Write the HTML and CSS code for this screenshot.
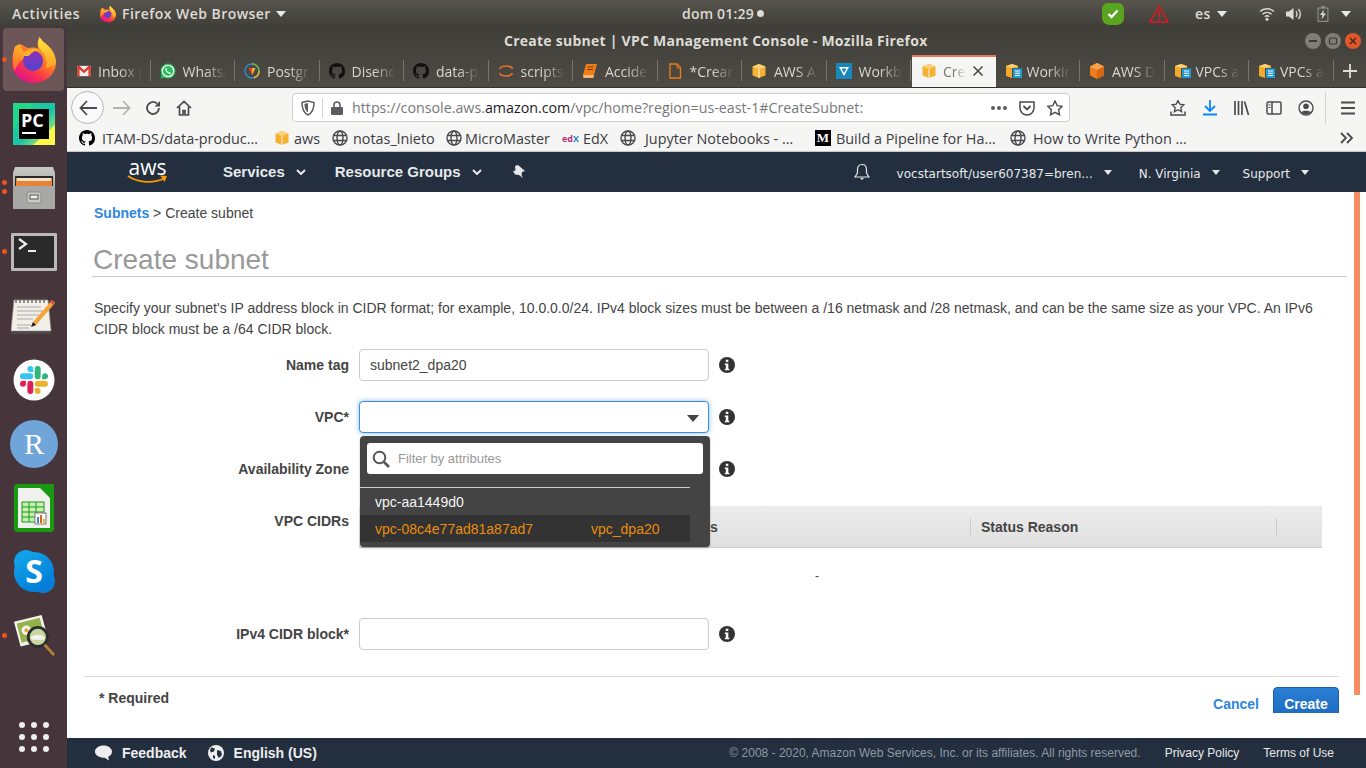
FILE: index.html
```html
<!DOCTYPE html>
<html lang="en">
<head>
<meta charset="utf-8">
<title>Create subnet | VPC Management Console</title>
<link rel="stylesheet" href="styles.css">
</head>
<body>
<svg class="defs" width="0" height="0" aria-hidden="true">
  <defs>
    <linearGradient id="ffbase" x1="0.9" y1="0.15" x2="0.3" y2="1">
      <stop offset="0" stop-color="#ffb52a"/><stop offset="0.4" stop-color="#ff7d24"/><stop offset="0.72" stop-color="#f9314f"/><stop offset="1" stop-color="#e0148c"/>
    </linearGradient>
    <linearGradient id="ffflame" x1="0.4" y1="0" x2="0.7" y2="1">
      <stop offset="0" stop-color="#ffe03c"/><stop offset="1" stop-color="#ffa428"/>
    </linearGradient>
    <linearGradient id="fftail" x1="0.6" y1="0" x2="0.4" y2="1">
      <stop offset="0" stop-color="#ffb92c"/><stop offset="1" stop-color="#ff6a2a"/>
    </linearGradient>
    <linearGradient id="ffcore" x1="0.5" y1="0" x2="0.5" y2="1">
      <stop offset="0" stop-color="#8f2fb8"/><stop offset="1" stop-color="#5046cf"/>
    </linearGradient>
    <linearGradient id="skypeg" x1="0.2" y1="0" x2="0.8" y2="1">
      <stop offset="0" stop-color="#12a6ec"/><stop offset="1" stop-color="#0078d4"/>
    </linearGradient>
    <linearGradient id="filesg" x1="0" y1="0" x2="0" y2="1">
      <stop offset="0" stop-color="#c9c9c7"/><stop offset="1" stop-color="#8d8d8b"/>
    </linearGradient>
    <linearGradient id="pcg" x1="0" y1="0" x2="1" y2="1">
      <stop offset="0" stop-color="#21d789"/><stop offset="0.55" stop-color="#19c4a8"/><stop offset="1" stop-color="#fcf84a"/>
    </linearGradient>
    <symbol id="firefox" viewBox="0 0 48 50">
      <path d="M3 11C1 18 0 24 0 29c0 12 11 21 24 21s24-10 24-22c0-10-7-18-13-22-2-2-4-4-5-6-2 5-3 9-1 13-4-2-8-2-12-1-3-2-8-5-9-4-2 0-4 1-5 3z" fill="url(#ffbase)"/>
      <path d="M30 0c-2 6-2 11 3 16 5 5 6 13 4 18 5-3 10-2 11-6 0-10-7-18-13-22-2-2-4-4-5-6z" fill="url(#ffflame)"/>
      <path d="M3 11C0 20 0 30 3 37c3-9 8-13 13-15-2-5-6-10-7-14-2 0-4 1-6 3z" fill="url(#fftail)"/>
      <circle cx="23" cy="26" r="11" fill="url(#ffcore)"/>
      <path d="M11 19c5-7 13-8 21-4-5-1-10 1-13 5-3 1-6 1-8-1z" fill="#ffb02a"/>
    </symbol>
    <symbol id="cube" viewBox="1 1 14 14">
      <path d="M8 1l6.500 2.600v8.800L8 15 1.500 12.400V3.600z" fill="#f4b133"/>
      <path d="M1.500 3.600L8 6.200l6.500-2.600L8 1z" fill="#fbd27a"/>
      <path d="M7.500 6.200h1V15h-1z" fill="#fff6df"/>
    </symbol>
    <symbol id="doccube" viewBox="0 0 18 16">
      <path d="M7 1l6 2v2H7v10L1 13V3z" fill="#f3a92c"/>
      <path d="M1 3l6 2 6-2-6-2z" fill="#fbd27a"/>
      <path d="M8 5.500h9V15H8z" fill="#1f9ad6"/>
      <path d="M10 7.500h5v1h-5zM10 9.800h5v1h-5zM10 12h5v1h-5z" fill="#fff"/>
    </symbol>
    <symbol id="github" viewBox="0 0 16 16">
      <path d="M8 0C3.58 0 0 3.58 0 8c0 3.54 2.29 6.53 5.47 7.59.4.07.55-.17.55-.38 0-.19-.01-.82-.01-1.49-2.01.37-2.53-.49-2.69-.94-.09-.23-.48-.94-.82-1.13-.28-.15-.68-.52-.01-.53.63-.01 1.08.58 1.23.82.72 1.21 1.87.87 2.33.66.07-.52.28-.87.51-1.07-1.78-.2-3.64-.89-3.64-3.95 0-.87.31-1.59.82-2.15-.08-.2-.36-1.02.08-2.12 0 0 .67-.21 2.2.82.64-.18 1.32-.27 2-.27.68 0 1.36.09 2 .27 1.53-1.04 2.2-.82 2.2-.82.44 1.1.16 1.92.08 2.12.51.56.82 1.27.82 2.15 0 3.07-1.87 3.75-3.65 3.95.29.25.54.73.54 1.48 0 1.07-.01 1.93-.01 2.2 0 .21.15.46.55.38A8.013 8.013 0 0016 8c0-4.42-3.58-8-8-8z"/>
    </symbol>
    <symbol id="globe" viewBox="0 0 16 16">
      <g fill="none" stroke="#4a4a4f" stroke-width="1.400">
        <circle cx="8" cy="8" r="7"/><ellipse cx="8" cy="8" rx="3" ry="7"/><path d="M1.500 5.500h13M1.500 10.500h13"/>
      </g>
    </symbol>
    <symbol id="info" viewBox="0 0 16 16">
      <circle cx="8" cy="8" r="8" fill="#333"/>
      <path d="M6.800 2.800h2.500v2.300H6.800zM5.800 6.600h3.500v5.200h1v1.500H5.800v-1.500h1V8.100h-1z" fill="#fff"/>
    </symbol>
    <symbol id="caretw" viewBox="0 0 10 6"><path d="M0 0h10L5 6z" fill="#e8e8e8"/></symbol>
    <symbol id="chev" viewBox="0 0 10 6"><path d="M1 1l4 4 4-4" fill="none" stroke="#e6e8ea" stroke-width="2"/></symbol>
  </defs>
</svg>

<header class="topbar">
  <span class="tb-activities">Activities</span>
  <svg class="tb-ff"><use href="#firefox"/></svg>
  <span class="tb-app">Firefox Web Browser</span>
  <svg class="tb-caret tb-caret-app"><use href="#caretw"/></svg>
  <span class="tb-clock">dom 01:29</span>
  <span class="tb-dot"></span>
  <svg class="tb-shield" viewBox="0 0 22 22"><path d="M6 0h10c4 0 6 3 6 7v8c0 4-3 7-8 7H8c-5 0-8-3-8-8V6c0-3 2-6 6-6z" fill="#5aa51f"/><path d="M6.500 11l3 3 6-6.500" fill="none" stroke="#fff" stroke-width="2.400"/></svg>
  <svg class="tb-warn" viewBox="0 0 20 18"><path d="M10 1l9 16H1z" fill="none" stroke="#e8141c" stroke-width="1.400"/><path d="M9.200 6h1.600v6H9.200zM9.200 13h1.600v1.800H9.200z" fill="#e8141c"/></svg>
  <span class="tb-lang">es</span>
  <svg class="tb-caret tb-caret-lang"><use href="#caretw"/></svg>
  <svg class="tb-wifi" viewBox="0 0 16 14"><g fill="none" stroke="#dedbd5" stroke-width="1.500"><path d="M1 4.500c4-3.600 10-3.600 14 0"/><path d="M3.500 7.200c2.600-2.400 6.400-2.400 9 0"/><path d="M5.800 9.700c1.300-1.100 3.100-1.100 4.400 0"/></g><circle cx="8" cy="12.200" r="1.500" fill="#dedbd5"/></svg>
  <svg class="tb-vol" viewBox="0 0 16 14"><path d="M0 4.500h3L7.500 1v12L3 9.500H0z" fill="#dedbd5"/><path d="M10 4c1.200 1.800 1.200 4.200 0 6M12.500 2c2.200 3 2.200 7 0 10" fill="none" stroke="#dedbd5" stroke-width="1.300"/></svg>
  <svg class="tb-bat" viewBox="0 0 12 16"><path d="M4 0h4v1.500h3.500V16H.5V1.500H4z" fill="#8b8983"/><path d="M1.700 2.700h8.600v12.100H1.700z" fill="#4a4843"/><path d="M7 3.500L3 9h2.500L4.500 13.500 9 7.500H6.300z" fill="#dedbd5"/></svg>
  <svg class="tb-caret tb-caret-sys"><use href="#caretw"/></svg>
</header>

<div class="desktop">
  <nav class="dock">
    <div class="dock-item dock-active"><span class="pip pip-ff"></span><svg class="di-ff"><use href="#firefox"/></svg></div>
    <div class="dock-item">
      <svg class="di-42" viewBox="0 0 42 42"><rect width="42" height="42" fill="url(#pcg)"/><path d="M0 0h22L0 26z" fill="#21d789"/><path d="M42 22v20H20z" fill="#fcf84a"/><rect x="6" y="6" width="30" height="30" fill="#000"/><text x="8" y="24" class="pc-text">PC</text><rect x="9" y="29" width="14" height="2" fill="#fff"/></svg>
    </div>
    <div class="dock-item"><span class="pip pip-f1"></span><span class="pip pip-f2"></span>
      <svg class="di-44" viewBox="0 0 44 44"><path d="M3 1h38l2 6v36H1V7z" fill="url(#filesg)"/><rect x="3" y="10" width="38" height="11" fill="#2a2a2a"/><path d="M4 12h36v8H4z" fill="#e8833a"/><path d="M5 12h34v3H5z" fill="#f6e0c2"/><path d="M1 20h42v23H1z" fill="#a8a8a6"/><rect x="15" y="26" width="14" height="11" rx="2" fill="#c9c9c7" stroke="#8a8a88"/><rect x="18" y="29" width="8" height="4" fill="#eee" stroke="#555"/></svg>
    </div>
    <div class="dock-item"><span class="pip pip-t"></span>
      <svg class="di-46" viewBox="0 0 46 38"><rect width="46" height="38" rx="1" fill="#b9b9b7"/><rect x="3" y="3" width="40" height="32" fill="#2a2a2a"/><path d="M8 6l7 5-7 5" fill="none" stroke="#eee" stroke-width="2.200"/><rect x="17" y="17" width="8" height="2" fill="#eee"/></svg>
    </div>
    <div class="dock-item">
      <svg class="di-46" viewBox="0 0 46 38"><path d="M3 3h34l3 31H0z" fill="#f1efe8" stroke="#999" stroke-width="0.600"/><path d="M1 35h39v2H1z" fill="#4a4a48"/><path d="M5 1v5M9 1v5M13 1v5M17 1v5M21 1v5M25 1v5M29 1v5M33 1v5" stroke="#555" stroke-width="1.200"/><path d="M6 10h24M6 14h26M6 18h22M6 22h16M6 28h14M6 31h12" stroke="#aaa" stroke-width="1"/><path d="M41 3l3 3-19 22-5 2 2-5z" fill="#f4a63a"/><path d="M41 3l3 3-2 2-3-3z" fill="#d9534f"/><path d="M20 30l2-5 3 3z" fill="#222"/></svg>
    </div>
    <div class="dock-item">
      <svg class="di-42" viewBox="0 0 42 42"><circle cx="21" cy="21" r="20.500" fill="#fff"/><g transform="translate(7 7) scale(1.167)"><path fill="#e01e5a" d="M5.042 15.165a2.528 2.528 0 0 1-2.52 2.523A2.528 2.528 0 0 1 0 15.165a2.527 2.527 0 0 1 2.522-2.52h2.52v2.52zM6.313 15.165a2.527 2.527 0 0 1 2.521-2.52 2.527 2.527 0 0 1 2.521 2.52v6.313A2.528 2.528 0 0 1 8.834 24a2.528 2.528 0 0 1-2.521-2.522v-6.313z"/><path fill="#36c5f0" d="M8.834 5.042a2.528 2.528 0 0 1-2.521-2.52A2.528 2.528 0 0 1 8.834 0a2.528 2.528 0 0 1 2.521 2.522v2.52H8.834zM8.834 6.313a2.528 2.528 0 0 1 2.521 2.521 2.528 2.528 0 0 1-2.521 2.521H2.522A2.528 2.528 0 0 1 0 8.834a2.528 2.528 0 0 1 2.522-2.521h6.312z"/><path fill="#2eb67d" d="M18.956 8.834a2.528 2.528 0 0 1 2.522-2.521A2.528 2.528 0 0 1 24 8.834a2.528 2.528 0 0 1-2.522 2.521h-2.522V8.834zM17.688 8.834a2.528 2.528 0 0 1-2.523 2.521 2.527 2.527 0 0 1-2.52-2.521V2.522A2.527 2.527 0 0 1 15.165 0a2.528 2.528 0 0 1 2.523 2.522v6.312z"/><path fill="#ecb22e" d="M15.165 18.956a2.528 2.528 0 0 1 2.523 2.522A2.528 2.528 0 0 1 15.165 24a2.527 2.527 0 0 1-2.52-2.522v-2.522h2.52zM15.165 17.688a2.527 2.527 0 0 1-2.52-2.523 2.526 2.526 0 0 1 2.52-2.52h6.313A2.527 2.527 0 0 1 24 15.165a2.528 2.528 0 0 1-2.522 2.523h-6.313z"/></g></svg>
    </div>
    <div class="dock-item">
      <svg class="di-48" viewBox="0 0 48 48"><circle cx="24" cy="24" r="24" fill="#6fa5d8"/><text x="24" y="34" class="r-text">R</text></svg>
    </div>
    <div class="dock-item">
      <svg class="di-calc" viewBox="0 0 40 48"><path d="M2 0h26l12 12v34l-2 2H2l-2-2V2z" fill="#189a10"/><path d="M4 4h22l10 10v30H4z" fill="#f0f0ee"/><path d="M28 0h12v12z" fill="#189a10"/><rect x="8" y="18" width="22" height="20" fill="#c9eeb8" stroke="#189a10"/><path d="M8 23h22M8 28h22M8 33h22M15 18v20M22 18v20" stroke="#189a10"/><rect x="21" y="29" width="11" height="11" fill="#fff" stroke="#777"/><path d="M23 33h2v6h-2z" fill="#3a85c6"/><path d="M26 31h2v8h-2z" fill="#e2612a"/><path d="M29 35h2v4h-2z" fill="#f0b02b"/></svg>
    </div>
    <div class="dock-item">
      <svg class="di-44" viewBox="0 0 44 44"><circle cx="14" cy="12" r="12" fill="#0fa0e6"/><circle cx="31" cy="31" r="12" fill="#0a7ed6"/><circle cx="22" cy="22" r="20" fill="url(#skypeg)"/><text x="22" y="33" class="s-text">S</text></svg>
    </div>
    <div class="dock-item"><span class="pip pip-e"></span>
      <svg class="di-46" viewBox="0 0 46 46"><path d="M2 8l29-7 7 26-29 7z" fill="#f2f2ee"/><path d="M5 10l24-6 5 20-24 6z" fill="#95b24a"/><circle cx="15" cy="17" r="5" fill="#f5f5f0"/><circle cx="15" cy="17" r="2" fill="#e8a92a"/><circle cx="27" cy="24" r="10" fill="#c8d6a0" stroke="#2e2e2e" stroke-width="3"/><path d="M20 24c4-3 10-3 14 0v3H20z" fill="#f2f2ee"/><path d="M34 32l10 11" stroke="#b3833c" stroke-width="3"/></svg>
    </div>
    <div class="dock-grid">
      <span></span><span></span><span></span><span></span><span></span><span></span><span></span><span></span><span></span>
    </div>
  </nav>

  <div class="window">
    <div class="titlebar">
      <span class="win-title">Create subnet | VPC Management Console - Mozilla Firefox</span>
      <div class="win-btns">
        <span class="wb"><svg viewBox="0 0 16 16"><circle cx="8" cy="8" r="8" fill="#7f7d76"/><path d="M4 7h8v2H4z" fill="#3a3934"/></svg></span>
        <span class="wb"><svg viewBox="0 0 16 16"><circle cx="8" cy="8" r="8" fill="#7f7d76"/><rect x="4.500" y="5" width="7" height="6" rx="1" fill="none" stroke="#3a3934" stroke-width="1.200"/></svg></span>
        <span class="wb"><svg viewBox="0 0 16 16"><circle cx="8" cy="8" r="8" fill="#e0572b"/><path d="M5 5l6 6M11 5l-6 6" stroke="#4a2a1e" stroke-width="1.500"/></svg></span>
      </div>
    </div>

    <div class="tabs">
      <div class="tab"><svg class="ti ti-gmail" viewBox="0 0 16 14"><rect y="1" width="16" height="12" fill="#eee"/><path d="M0 1h2.500L8 6l5.500-5H16v12h-2.800V5L8 9.500 2.800 5v8H0z" fill="#d8392b"/></svg><span class="tl">Inbox (</span></div>
      <div class="tab"><svg class="ti" viewBox="0 0 16 16"><circle cx="8" cy="8" r="7.500" fill="#2bbf5a"/><path d="M0.500 15.500L2 10l4 4z" fill="#2bbf5a"/><circle cx="8" cy="8" r="5.700" fill="none" stroke="#fff" stroke-width="1.200"/><path d="M5.800 5c-1 1.500 0 3.500 1.500 4.700s3 1.500 3.800.5L9.700 9 9 9.500C8 9 7 8 6.700 7.200l.5-.7-.7-1.500z" fill="#fff"/></svg><span class="tl">WhatsA</span></div>
      <div class="tab"><svg class="ti" viewBox="0 0 16 16"><circle cx="8" cy="8" r="7" fill="none" stroke="#2a8fc9" stroke-width="1.500"/><path d="M8 1a7 7 0 0 1 7 7" fill="none" stroke="#6fbf3a" stroke-width="1.500"/><path d="M15 8a7 7 0 0 1-5 6.700" fill="none" stroke="#e8b52a" stroke-width="1.500"/><path d="M4.500 5h7l-3.500 7z" fill="#e6432c"/><path d="M8 5h3.500L8 12z" fill="#f0b62c"/></svg><span class="tl">Postgr</span></div>
      <div class="tab"><svg class="ti ti-gh"><use href="#github"/></svg><span class="tl">Disenc</span></div>
      <div class="tab"><svg class="ti ti-gh"><use href="#github"/></svg><span class="tl">data-p</span></div>
      <div class="tab"><svg class="ti" viewBox="0 0 16 16"><path d="M1.500 6C3 2 13 2 14.500 6M1.500 10c1.500 4 11.500 4 13 0" fill="none" stroke="#e8702a" stroke-width="1.600"/></svg><span class="tl">scripts</span></div>
      <div class="tab"><svg class="ti" viewBox="0 0 16 16"><path d="M4 1h11l-3 11H1z" fill="#ee7d14"/><path d="M1 12h11l-.6 3H1.500z" fill="#f9b678"/><path d="M5.500 4h6M5 6.500h6" stroke="#7a3a05"/></svg><span class="tl">Accide</span></div>
      <div class="tab"><svg class="ti" viewBox="0 0 16 16"><path d="M3 1h7l3.500 3.500V15H3z" fill="none" stroke="#ee7d14" stroke-width="1.300"/><path d="M10 1v4h3.500" fill="none" stroke="#ee7d14"/></svg><span class="tl">*Crear</span></div>
      <div class="tab"><svg class="ti ti-cube"><use href="#cube"/></svg><span class="tl">AWS A</span></div>
      <div class="tab"><svg class="ti" viewBox="0 0 16 16"><rect width="16" height="16" fill="#1a87bb"/><path d="M3 4h10L8 13z" fill="#fff"/><path d="M5.500 5.500h5L8 10z" fill="#1a87bb"/></svg><span class="tl">Workb</span></div>
      <div class="tab tab-active"><svg class="ti ti-cube"><use href="#cube"/></svg><span class="tl tl-active">Create</span><svg class="tab-x" viewBox="0 0 10 10"><path d="M0.500 0.500l9 9M9.500 0.500l-9 9" stroke="#444" stroke-width="1.500"/></svg></div>
      <div class="tab tab-doc"><svg class="ti ti-doc"><use href="#doccube"/></svg><span class="tl">Workin</span></div>
      <div class="tab"><svg class="ti" viewBox="0 0 16 16"><path d="M8 0l7 3.500v9L8 16l-7-3.500v-9z" fill="#ef7d1f"/><path d="M8 0l7 3.500L8 7 1 3.500z" fill="#f8a24a"/><path d="M8 7l7-3.500v9L8 16z" fill="#d96812"/></svg><span class="tl">AWS D</span></div>
      <div class="tab tab-doc"><svg class="ti ti-doc"><use href="#doccube"/></svg><span class="tl">VPCs a</span></div>
      <div class="tab tab-doc"><svg class="ti ti-doc"><use href="#doccube"/></svg><span class="tl">VPCs a</span></div>
      <div class="tab-new"><svg viewBox="0 0 14 14"><path d="M7 0v14M0 7h14" stroke="#dedbd5" stroke-width="1.800"/></svg></div>
    </div>

    <div class="navbar">
      <div class="nav-back"><svg viewBox="0 0 18 16"><path d="M8 1L1.500 8 8 15M2 8h16" fill="none" stroke="#4a4a4f" stroke-width="1.800"/></svg></div>
      <svg class="nav-ic nav-fwd" viewBox="0 0 18 16"><path d="M10 1l6.500 7L10 15M16 8H0" fill="none" stroke="#b2b2b3" stroke-width="1.800"/></svg>
      <svg class="nav-ic nav-rel" viewBox="0 0 16 16"><path d="M14 8a6 6 0 1 1-2-4.500" fill="none" stroke="#4a4a4f" stroke-width="1.800"/><path d="M15 1v5.500H9.500z" fill="#4a4a4f"/></svg>
      <svg class="nav-ic nav-home" viewBox="0 0 16 16"><path d="M1 8l7-6.500L15 8M3.500 6.500V15h3.500v-4.500h2V15h3.500V6.500" fill="none" stroke="#4a4a4f" stroke-width="1.700"/></svg>
      <div class="urlbar">
        <svg class="ub-shield" viewBox="0 0 14 16"><path d="M1 2.500L7 1l6 1.500c0 6-1 10-6 12.500C2 12.500 1 8.500 1 2.500z" fill="none" stroke="#5c5c61" stroke-width="1.500"/><path d="M7 3v9.500C4.500 11 3.500 8 3.400 4z" fill="#5c5c61"/></svg>
        <span class="ub-sep"></span>
        <svg class="ub-lock" viewBox="0 0 12 14"><path d="M3 6V4a3 3 0 0 1 6 0v2" fill="none" stroke="#5c5c61" stroke-width="1.600"/><rect y="6" width="12" height="8" rx="1" fill="#5c5c61"/></svg>
        <span class="ub-url">https://console.aws.<b class="ub-host">amazon.com</b>/vpc/home?region=us-east-1#CreateSubnet:</span>
        <span class="ub-dots"><i></i><i></i><i></i></span>
        <svg class="ub-pocket" viewBox="0 0 16 16"><path d="M1 2h14v6a7 7 0 0 1-14 0z" fill="none" stroke="#4a4a4f" stroke-width="1.500"/><path d="M4.500 6L8 9.500 11.500 6" fill="none" stroke="#4a4a4f" stroke-width="1.800"/></svg>
        <svg class="ub-star" viewBox="0 0 16 16"><path d="M8 1l2.200 4.600 5 .7-3.600 3.500.9 5L8 12.400l-4.500 2.400.9-5L.8 6.300l5-.7z" fill="none" stroke="#4a4a4f" stroke-width="1.400"/></svg>
      </div>
      <div class="nav-right">
        <svg class="nr" viewBox="0 0 16 16"><path d="M8 0.500l1.800 3.700 4 .6-2.900 2.800.7 4L8 9.700l-3.600 1.900.7-4L2.200 4.800l4-.6z" fill="none" stroke="#4a4a4f" stroke-width="1.400"/><path d="M1 11.500v3.500h14v-3.500" fill="none" stroke="#4a4a4f" stroke-width="1.500"/></svg>
        <svg class="nr" viewBox="0 0 16 16"><path d="M8 0v10M3 6l5 5 5-5" fill="none" stroke="#0a84ff" stroke-width="1.800"/><path d="M1 13.500h14v2H1z" fill="#0a84ff"/></svg>
        <svg class="nr" viewBox="0 0 16 16"><path d="M1 1v14M4.500 1v14M8 1v14M10.500 1.500l4 13.500" fill="none" stroke="#4a4a4f" stroke-width="1.700"/></svg>
        <svg class="nr" viewBox="0 0 16 16"><rect x="1" y="2" width="14" height="12" rx="1.500" fill="none" stroke="#4a4a4f" stroke-width="1.500"/><path d="M6 2v12" stroke="#4a4a4f" stroke-width="1.500"/><path d="M2.500 5h2M2.500 7.500h2" stroke="#4a4a4f"/></svg>
        <svg class="nr" viewBox="0 0 16 16"><circle cx="8" cy="8" r="7" fill="none" stroke="#4a4a4f" stroke-width="1.400"/><circle cx="8" cy="6.300" r="2.800" fill="#4a4a4f"/><path d="M3 12.500c1-2.500 9-2.500 10 0-2.500 2.300-7.500 2.300-10 0z" fill="#4a4a4f"/></svg>
        <span class="nav-sep"></span>
        <svg class="nr nr-menu" viewBox="0 0 16 16"><path d="M1 2.500h14M1 8h14M1 13.500h14" stroke="#4a4a4f" stroke-width="1.800"/></svg>
      </div>
    </div>

    <div class="bookmarks">
      <span class="bm bm-1"><svg class="bi"><use href="#github"/></svg>ITAM-DS/data-produc…</span>
      <span class="bm bm-2"><svg class="bi"><use href="#cube"/></svg>aws</span>
      <span class="bm bm-3"><svg class="bi"><use href="#globe"/></svg>notas_lnieto</span>
      <span class="bm bm-4"><svg class="bi"><use href="#globe"/></svg>MicroMaster</span>
      <span class="bm bm-5"><span class="edx"><span class="edx-e">ed</span><span class="edx-x">X</span></span>EdX</span>
      <span class="bm bm-6"><svg class="bi"><use href="#globe"/></svg>Jupyter Notebooks - …</span>
      <span class="bm bm-7"><span class="medium">M</span>Build a Pipeline for Ha…</span>
      <span class="bm bm-8"><svg class="bi"><use href="#globe"/></svg>How to Write Python …</span>
      <svg class="bm-more" viewBox="0 0 14 12"><path d="M1 1l5 5-5 5M7 1l5 5-5 5" fill="none" stroke="#4a4a4f" stroke-width="1.800"/></svg>
    </div>

    <div class="awsnav">
      <span class="aws-logo"><span class="aws-word">aws</span><svg viewBox="0 0 42 9"><path d="M1 1c10 7 26 8 38 2" fill="none" stroke="#f90" stroke-width="1.800"/><path d="M34 0.500l7 .5-2.500 6z" fill="#f90"/></svg></span>
      <span class="an-main an-services">Services</span>
      <svg class="an-chev"><use href="#chev"/></svg>
      <span class="an-main an-groups">Resource Groups</span>
      <svg class="an-chev"><use href="#chev"/></svg>
      <svg class="an-pin" viewBox="0 0 14 14"><path d="M3 1l3-1 7 6-3 1-.5 3 1.500 3L7 10 3 9.500 1 6l2.500-.5z" fill="#e6e8ea"/></svg>
      <svg class="an-bell" viewBox="0 0 16 18"><path d="M8 1.500c-3 0-4.500 2.300-4.500 5v3.500L1 14h14l-2.500-4V6.500c0-2.700-1.500-5-4.500-5z" fill="none" stroke="#e6e8ea" stroke-width="1.200"/><path d="M6 15h4l-2 2z" fill="#e6e8ea"/></svg>
      <span class="an-side an-user">vocstartsoft/user607387=bren...</span>
      <svg class="an-caret"><use href="#caretw"/></svg>
      <span class="an-side an-region">N. Virginia</span>
      <svg class="an-caret"><use href="#caretw"/></svg>
      <span class="an-side an-support">Support</span>
      <svg class="an-caret"><use href="#caretw"/></svg>
    </div>

    <div class="content">
      <main class="panel">
        <div class="crumb"><a class="crumb-link">Subnets</a> &gt; Create subnet</div>
        <h1 class="page-title">Create subnet</h1>
        <p class="intro">Specify your subnet's IP address block in CIDR format; for example, 10.0.0.0/24. IPv4 block sizes must be between a /16 netmask and /28 netmask, and can be the same size as your VPC. An IPv6 CIDR block must be a /64 CIDR block.</p>

        <div class="row">
          <label class="lbl">Name tag</label>
          <div class="field field-value">subnet2_dpa20</div>
          <svg class="info"><use href="#info"/></svg>
        </div>
        <div class="row">
          <label class="lbl">VPC*</label>
          <div class="field field-focus"><svg class="sel-caret" viewBox="0 0 12 7"><path d="M0 0h12L6 7z" fill="#444"/></svg></div>
          <svg class="info"><use href="#info"/></svg>
        </div>
        <div class="row">
          <label class="lbl">Availability Zone</label>
          <div class="field field-blank"></div>
          <svg class="info"><use href="#info"/></svg>
        </div>
        <div class="row-table">
          <label class="lbl lbl-table">VPC CIDRs</label>
          <div class="cidr">
            <div class="cidr-head">
              <span class="ch ch-1"></span>
              <span class="ch ch-2">Status</span>
              <span class="ch ch-3">Status Reason</span>
              <span class="ch ch-4"></span>
            </div>
            <div class="cidr-body">-</div>
          </div>
        </div>
        <div class="row">
          <label class="lbl">IPv4 CIDR block*</label>
          <div class="field"></div>
          <svg class="info"><use href="#info"/></svg>
        </div>

        <div class="actions">
          <span class="required">* Required</span>
          <div class="action-btns">
            <a class="cancel">Cancel</a>
            <button class="create">Create</button>
          </div>
        </div>

        <div class="dropdown">
          <div class="filter">
            <svg class="filter-ic" viewBox="0 0 18 18"><circle cx="7.500" cy="7.500" r="5.800" fill="none" stroke="#555" stroke-width="2"/><path d="M12 12l5 5" stroke="#555" stroke-width="2.600"/></svg>
            <span class="filter-ph">Filter by attributes</span>
          </div>
          <div class="dd-rule"></div>
          <div class="dd-item"><span class="dd-id">vpc-aa1449d0</span></div>
          <div class="dd-item dd-sel"><span class="dd-id">vpc-08c4e77ad81a87ad7</span><span>vpc_dpa20</span></div>
        </div>
      </main>
      <div class="thumb"></div>
    </div>

    <footer class="foot">
      <svg class="foot-ic foot-ic-fb" viewBox="0 0 18 16"><path d="M9 0c5 0 9 2.800 9 6.500 0 2.500-1.700 4.500-4 5.500l.8 4-4.500-3.100H9C4 13 0 10.200 0 6.500S4 0 9 0z" fill="#eee"/></svg>
      <span class="foot-b foot-fb">Feedback</span>
      <svg class="foot-ic foot-ic-gl" viewBox="0 0 16 16"><circle cx="8" cy="8" r="8" fill="#eee"/><path d="M3 2.500l4 1-1 3-3 1-1-2zM9 5l4 1 1 4-3 3-2-3zM5 10l2 1v3l-2-1z" fill="#232f3e"/></svg>
      <span class="foot-b">English (US)</span>
      <span class="foot-copy">© 2008 - 2020, Amazon Web Services, Inc. or its affiliates. All rights reserved.</span>
      <span class="foot-link foot-pp">Privacy Policy</span>
      <span class="foot-link foot-tu">Terms of Use</span>
    </footer>
  </div>
</div>
</body>
</html>
```

FILE: styles.css
```css
* { box-sizing: border-box; }
html, body { margin: 0; height: 100%; }
body {
  width: 1366px; height: 768px; overflow: hidden;
  display: flex; flex-direction: column;
  font-family: "Liberation Sans", Arial, sans-serif;
  background: #fff;
}
svg { display: block; flex: none; }
.defs { position: absolute; }

/* GNOME top bar */
.topbar {
  height: 27px; flex: none;
  display: flex; align-items: center;
  background: linear-gradient(#57544d, #3f3e39);
  color: #dedbd5;
  font-family: "Open Sans", sans-serif; font-weight: 600; font-size: 14px;
  letter-spacing: .45px;
}
.tb-activities { margin-left: 12px; width: 88px; letter-spacing: .7px; }
.tb-ff { width: 16px; height: 18px; }
.tb-app { margin-left: 6px; width: 154px; white-space: nowrap; }
.tb-caret { width: 10px; height: 6px; }
.tb-clock { margin-left: 396px; width: 73px; white-space: nowrap; letter-spacing: .2px; }
.tb-dot { width: 7px; height: 7px; border-radius: 50%; background: #dedbd5; margin-left: 2px; }
.tb-shield { width: 22px; height: 22px; margin-left: 338px; }
.tb-warn { width: 20px; height: 18px; margin-left: 25px; }
.tb-lang { margin-left: 26px; width: 22px; }
.tb-wifi { width: 16px; height: 14px; margin-left: 32px; }
.tb-vol { width: 16px; height: 14px; margin-left: 11px; }
.tb-bat { width: 12px; height: 16px; margin-left: 15px; }
.tb-caret-sys { margin-left: 12px; }

.desktop { flex: 1; min-height: 0; display: flex; }

/* Dock */
.dock {
  width: 67px; flex: none;
  background: #47353c;
  display: flex; flex-direction: column;
  padding-top: 1px;
}
.dock-item {
  position: relative; height: 64px; flex: none;
  display: flex; align-items: center; justify-content: center;
}
.dock-active { margin: 0 3px; background: #6d5658; border-radius: 4px; height: 63px; margin-bottom: 1px; }
.pip { position: absolute; width: 5px; height: 5px; border-radius: 50%; background: #e95420; left: 2px; }
.pip-ff { left: -1px; top: 29px; }
.pip-f1 { top: 24px; }
.pip-f2 { top: 33px; }
.pip-t { top: 29px; }
.pip-e { top: 29px; }
.di-ff { width: 44px; height: 46px; }
.di-42 { width: 42px; height: 42px; }
.di-44 { width: 44px; height: 44px; }
.di-46 { width: 46px; height: 44px; }
.di-48 { width: 48px; height: 48px; }
.di-calc { width: 40px; height: 48px; }
.pc-text { font: 700 18px "Open Sans", sans-serif; fill: #fff; }
.r-text { font: 400 30px "Liberation Serif", serif; fill: #fff; text-anchor: middle; }
.s-text { font: 700 32px "Open Sans", sans-serif; fill: #fff; text-anchor: middle; }
.dock-grid {
  margin: auto auto 16px;
  display: grid; grid-template-columns: repeat(3, 6px); gap: 6px;
}
.dock-grid span { width: 6px; height: 6px; border-radius: 50%; background: #eee; }

/* Firefox window */
.window { flex: 1; min-width: 0; display: flex; flex-direction: column; }
.titlebar {
  height: 28px; flex: none; position: relative;
  display: flex; align-items: center;
  background: linear-gradient(#3f3e39, #46443e);
  color: #dedbd5;
  font-family: "Open Sans", sans-serif; font-weight: 700; font-size: 14px;
  letter-spacing: .25px;
}
.win-title { margin-left: 437px; white-space: nowrap; padding-bottom: 2px; }
.win-btns { margin-left: auto; margin-right: 5px; display: flex; gap: 4px; }
.wb svg { width: 16px; height: 16px; }

.tabs {
  height: 33px; flex: none;
  display: flex;
  background: linear-gradient(#46443e, #4d4b44);
  border-bottom: 1px solid #33322e;
  font-family: "Open Sans", sans-serif; font-size: 14px; color: #d9d7d2;
}
.tab {
  width: 84.500px; flex: none;
  display: flex; align-items: center; gap: 7px;
  padding-left: 9px;
  position: relative;
}
.tab::after { content: ""; position: absolute; right: 0; top: 5px; bottom: 6px; width: 1px; background: #77756e; }
.tab:first-child { width: 83.500px; padding-left: 10px; }
.ti { width: 16px; height: 16px; }
.ti-gmail { width: 14px; height: 12px; }
.ti-gh { fill: #101010; }
.ti-cube { width: 14px; height: 14px; margin: 0 1px; }
.ti-doc { width: 18px; }
.tab-doc { padding-left: 9px; gap: 4px; }
.tl {
  width: 44px; overflow: hidden; white-space: nowrap;
  -webkit-mask-image: linear-gradient(to right, #000 50%, transparent);
  mask-image: linear-gradient(to right, #000 50%, transparent);
}
.tab-active {
  background: #f5f5f4; color: #77777a;
  border-top: 2px solid #e9785a;
  margin-left: 1px; width: 83.500px; padding-left: 9px; padding-bottom: 2px; gap: 6px;
}
.tab-active::after { display: none; }
.tl-active { width: 23px; }
.tab-x { width: 10px; height: 10px; margin-left: 1px; }
.tab-new { flex: 1; display: flex; align-items: center; justify-content: center; }
.tab-new svg { width: 14px; height: 14px; }

/* Nav bar */
.navbar {
  height: 36px; flex: none;
  display: flex; align-items: center;
  background: #f5f5f4;
  padding-top: 3px;
}
.nav-back {
  width: 33px; height: 33px; margin-left: 4px; border-radius: 50%;
  border: 1px solid #b5b5b5; background: #fafafa;
  display: flex; align-items: center; justify-content: center;
}
.nav-back svg { width: 18px; height: 16px; }
.nav-ic { width: 18px; height: 16px; }
.nav-fwd { margin-left: 9px; }
.nav-rel { margin-left: 14px; width: 16px; }
.nav-home { margin-left: 15px; width: 16px; }
.urlbar {
  width: 778px; height: 29px; margin-left: 100px;
  display: flex; align-items: center;
  background: #fff; border: 1px solid #cfcfcf; border-radius: 4px;
  font-family: "Open Sans", sans-serif; font-size: 14.250px; color: #77777a;
}
.ub-shield { width: 14px; height: 16px; margin-left: 8px; }
.ub-sep { width: 1px; height: 20px; background: #d4d4d4; margin-left: 7px; }
.ub-lock { width: 12px; height: 14px; margin-left: 8px; }
.ub-url { margin-left: 9px; white-space: nowrap; width: 639px; }
.ub-host { font-weight: 400; color: #1c1c1f; }
.ub-dots { display: flex; gap: 2px; width: 17px; }
.ub-dots i { width: 4px; height: 4px; border-radius: 50%; background: #5c5c61; }
.ub-pocket { width: 16px; height: 16px; margin-left: 11px; }
.ub-star { width: 16px; height: 16px; margin-left: 12px; }
.nav-right { display: flex; align-items: center; margin-left: 100px; }
.nr { width: 16px; height: 16px; margin-right: 16px; }
.nav-sep { width: 1px; height: 32px; background: #d4d4d4; margin-left: -5px; }
.nr-menu { margin: 0 0 0 14px; }

/* Bookmarks */
.bookmarks {
  height: 28px; flex: none;
  display: flex; align-items: center;
  background: #f5f5f4;
  border-bottom: 1px solid #c9c9c9;
  padding-top: 1px;
  font-family: "Open Sans", sans-serif; font-size: 14.400px; color: #3b3b3f;
}
.bm { display: flex; align-items: center; white-space: nowrap; }
.bi { width: 16px; height: 16px; margin-right: 7px; }
.bm-1 { margin-left: 12px; width: 196px; }
.bm-2 { width: 57px; }
.bm-2 .bi { width: 14px; height: 14px; margin-right: 5px; }
.bm-3 { width: 114px; }
.bm-3 .bi { margin-right: 5px; }
.bm-4 { width: 116px; }
.bm-4 .bi { margin-right: 3px; }
.bm-5 { width: 58px; }
.bm-6 { width: 195px; }
.bm-6 .bi { margin-right: 9px; }
.bm-7 { width: 195px; }
.bm-8 { width: 330px; }
.edx { width: 21px; font-size: 9px; font-weight: 700; display: flex; }
.edx-e { color: #b4337c; }
.edx-x { color: #2b7fc3; }
.medium {
  width: 16px; height: 16px; margin-right: 5px; background: #000; color: #fff;
  font: 700 13px/16px "Liberation Serif", serif; text-align: center;
}
.bm-more { width: 14px; height: 12px; }

/* AWS console nav */
.awsnav {
  height: 40px; flex: none;
  display: flex; align-items: center;
  background: #232f3e; color: #e6e8ea;
}
.aws-logo { margin-left: 60px; width: 41px; display: flex; flex-direction: column; align-items: center; }
.aws-word { font: 400 21px/15px "Open Sans", sans-serif; color: #fff; }
.aws-logo svg { width: 41px; height: 9px; }
.an-main { font-size: 15px; font-weight: 700; white-space: nowrap; padding-bottom: 2px; }
.an-services { margin-left: 55px; }
.an-groups { margin-left: 29px; }
.an-chev { width: 10px; height: 6px; margin-left: 11px; }
.an-pin { width: 14px; height: 14px; margin-left: 30px; }
.an-bell { width: 16px; height: 18px; margin-left: 328px; }
.an-side { font-family: "DejaVu Sans", sans-serif; font-size: 12px; white-space: nowrap; padding-top: 4px; }
.an-user { margin-left: 27px; }
.an-region { margin-left: 27px; }
.an-support { margin-left: 23px; }
.an-caret { width: 8px; height: 5px; margin-left: 11px; }

/* Content */
.content { flex: 1; min-height: 0; display: flex; background: #fff; }
.panel {
  position: relative;
  width: 1280px; height: 521px; overflow: hidden;
  padding-left: 17px; color: #444;
  font-size: 14px;
}
.crumb { margin: 12px 0 0 10px; line-height: 18px; }
.crumb-link { color: #2f86e0; font-weight: 700; }
.page-title {
  margin: 20px 0 0 8px; height: 35px; padding-left: 1px;
  font-size: 28px; line-height: 36px; font-weight: 400; color: #999;
  border-bottom: 1px solid #ccc;
}
.intro { margin: 21px 0 9px 10px; width: 1240px; line-height: 21px; }
.row {
  display: grid; grid-template-columns: 265px 350px 16px; column-gap: 10px;
  align-items: center; margin-bottom: 20px;
}
.lbl { text-align: right; font-weight: 700; color: #444; }
.field { height: 32px; border: 1px solid #ccc; border-radius: 4px; background: #fff; padding: 0 10px; display: flex; align-items: center; }
.field-value { color: #444; }
.field-focus { border-color: #3b8ee0; box-shadow: 0 0 5px rgba(59, 142, 224, .6); justify-content: flex-end; padding-right: 9px; }
.field-blank { border-color: transparent; }
.sel-caret { width: 12px; height: 7px; margin-top: 2px; }
.info { width: 16px; height: 16px; }
.row-table { display: grid; grid-template-columns: 265px 963px; column-gap: 10px; padding-top: 1px; margin-bottom: 14px; }
.lbl-table { padding-top: 7px; }
.cidr-head {
  height: 42px; display: flex; align-items: center;
  background: linear-gradient(#ececec, #e0e0e0);
  border-bottom: 1px solid #ccc;
  font-weight: 700; color: #444;
}
.ch { padding-left: 11px; height: 18px; line-height: 18px; }
.ch-1 { width: 305px; }
.ch-2 { width: 306px; }
.ch-3 { width: 306px; border-left: 1px solid #ccc; padding-left: 10px; }
.ch-4 { width: 46px; border-left: 1px solid #ccc; }
.cidr-body { height: 56px; width: 916px; text-align: center; line-height: 56px; font-size: 12px; color: #444; }
.actions {
  margin-top: 26px; margin-right: 8px;
  border-top: 1px solid #ddd;
  display: flex; justify-content: space-between; align-items: flex-start;
  padding-top: 10px;
}
.required { margin: 2px 0 0 15px; font-weight: 700; line-height: 18px; }
.action-btns { display: flex; align-items: center; gap: 14px; }
.cancel { color: #2f86e0; font-weight: 700; }
.create {
  width: 66px; height: 34px; padding: 0;
  font: 700 14px "Liberation Sans", Arial, sans-serif; color: #fff;
  background: linear-gradient(#2a7fd6, #1b68bd);
  border: 1px solid #1b5fa8; border-radius: 4px;
}

/* Dropdown overlay */
.dropdown {
  position: absolute; left: 293px; top: 244px;
  width: 350px; height: 111px;
  background: #444; border-radius: 4px;
  box-shadow: 0 1px 2px rgba(0, 0, 0, .3);
  color: #f4f4f4;
  padding-top: 7px;
}
.filter {
  margin-left: 7px; width: 336px; height: 31px;
  background: #fff; border-radius: 3px;
  display: flex; align-items: center;
  font-size: 13px;
}
.filter-ic { width: 18px; height: 18px; margin-left: 5px; }
.filter-ph { margin-left: 8px; color: #999; }
.dd-rule { width: 330px; height: 1px; background: #ccc; margin-top: 13px; }
.dd-item { width: 330px; height: 27px; padding-left: 15px; display: flex; align-items: center; white-space: nowrap; }
.dd-sel { background: #333; color: #e88c0c; }
.dd-id { width: 216px; }

.thumb { width: 6px; height: 503px; margin-left: 7px; background: #f68d62; }

/* Footer */
.foot {
  height: 30px; flex: none;
  display: flex; align-items: center;
  background: #232f3e; color: #eee;
}
.foot-ic-fb { width: 17px; height: 16px; margin-left: 28px; }
.foot-ic-gl { width: 16px; height: 16px; margin-left: 21px; }
.foot-b { font-size: 14px; font-weight: 700; margin-left: 10px; white-space: nowrap; }
.foot-copy { margin-left: auto; font-size: 12px; color: #8d99a5; white-space: nowrap; }
.foot-link { font-size: 12px; white-space: nowrap; color: #e6e8ea; }
.foot-pp { margin-left: 24px; }
.foot-tu { margin-left: 24px; margin-right: 32px; }
```
